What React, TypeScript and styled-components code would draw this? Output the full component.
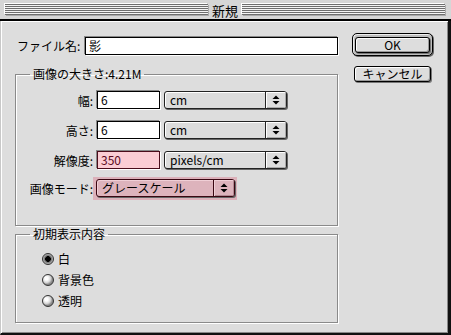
import React from 'react';
import styled, { createGlobalStyle } from 'styled-components';

const GlobalStyle = createGlobalStyle`
  html, body {
    margin: 0;
    padding: 0;
    background: #dddddd;
  }
  body {
    font-family: "Noto Sans CJK JP", "Noto Sans", sans-serif;
    font-size: 12px;
    color: #000;
  }
`;

const Window = styled.div`
  width: 451px;
  height: 335px;
  display: flex;
  flex-direction: column;
  background: #dddddd;
  overflow: hidden;
`;

const TitleBar = styled.div`
  height: 19px;
  flex: none;
  display: flex;
  align-items: center;
  gap: 4px;
  padding: 0 6px 0 5px;
  background: #d6d6d6;
  border-bottom: 2px solid #000;
`;

const Stripes = styled.div`
  flex: 1;
  height: 11px;
  background: repeating-linear-gradient(to bottom, #6e6e6e 0 1px, #f4f4f4 1px 2px);
  box-shadow: -1px -1px 0 #fff, 1px 1px 0 #aaa;
`;

const Title = styled.span`
  line-height: 19px;
  font-size: 13px;
  padding-top: 1px;
`;

const Body = styled.div`
  flex: 1;
  display: flex;
  gap: 14px;
  padding: 12px 15px 0 14px;
  border-left: 1px solid #c8c8c8;
  border-right: 3px solid #111;
  border-bottom: 2px solid #111;
  box-shadow: inset 1px 1px 0 #fff, inset -1px -1px 0 #888;
`;

const LeftColumn = styled.div`
  width: 323px;
  padding-top: 2px;
  display: flex;
  flex-direction: column;
`;

const RightColumn = styled.div`
  width: 82px;
  display: flex;
  flex-direction: column;
  align-items: center;
  gap: 10px;
`;

const FileRow = styled.div`
  display: flex;
  align-items: center;
  height: 21px;
`;

const Label = styled.span<{ $width?: number; $right?: boolean }>`
  width: ${(p) => (p.$width ? `${p.$width}px` : 'auto')};
  flex: none;
  white-space: nowrap;
  text-align: ${(p) => (p.$right ? 'right' : 'left')};
  padding-left: ${(p) => (p.$right ? 0 : 2)}px;
  box-sizing: border-box;
`;

const TextField = styled.div<{ $width: number; $pink?: boolean }>`
  width: ${(p) => p.$width}px;
  height: 18px;
  box-sizing: border-box;
  border: 1px solid ${(p) => (p.$pink ? '#4a0c1a' : '#000')};
  background: ${(p) => (p.$pink ? '#fbcdd4' : '#fff')};
  box-shadow: -1px -1px 0 #888, 1px 1px 0 #fff;
  padding-left: 3px;
  line-height: 16px;
  white-space: nowrap;
  color: ${(p) => (p.$pink ? '#5a0a1c' : '#000')};
`;

const Group = styled.fieldset<{ $top: number; $height: number }>`
  margin: ${(p) => p.$top}px 0 0 0;
  padding: 0;
  height: ${(p) => p.$height}px;
  box-sizing: border-box;
  border: 1px solid #8a8a8a;
  box-shadow: inset 1px 1px 0 #fff, 1px 1px 0 #fff;
  min-width: 0;
`;

const Legend = styled.legend`
  margin-left: 14px;
  padding: 0 3px;
  line-height: 16px;
  white-space: nowrap;
`;

const SizeGrid = styled.div`
  display: grid;
  grid-template-columns: 77px 63px 123px;
  column-gap: 4px;
  row-gap: 12px;
  align-items: center;
  padding-top: 9px;
`;

const ModeRow = styled.div`
  display: flex;
  align-items: center;
  margin-top: 8px;
`;

const Highlight = styled.div`
  padding: 2px 2px 3px 3px;
  background: #dcb1ba;
`;

const Popup = styled.div<{ $width: number; $pink?: boolean }>`
  width: ${(p) => p.$width}px;
  height: 18px;
  box-sizing: border-box;
  display: flex;
  border: 1px solid ${(p) => (p.$pink ? '#3a0712' : '#222')};
  border-radius: 3px;
  background: ${(p) => (p.$pink ? '#ddb3bc' : '#dcdcdc')};
  box-shadow: inset 1px 1px 0 ${(p) => (p.$pink ? '#f0cfd6' : '#fff')}, 1px 1px 0 #666;
  overflow: hidden;
`;

const PopupText = styled.span`
  flex: 1;
  padding-left: 5px;
  line-height: 16px;
  white-space: nowrap;
`;

const PopupArrow = styled.span<{ $pink?: boolean }>`
  width: 20px;
  flex: none;
  display: flex;
  align-items: center;
  justify-content: center;
  border-left: 1px solid ${(p) => (p.$pink ? '#3a0712' : '#222')};
  box-shadow: inset 1px 1px 0 ${(p) => (p.$pink ? '#f0cfd6' : '#fff')}, inset -1px -1px 0 ${(p) => (p.$pink ? '#b08a92' : '#aaa')};
`;

const RadioList = styled.div`
  display: flex;
  flex-direction: column;
  gap: 6px;
  padding: 9px 0 0 26px;
`;

const RadioRow = styled.label`
  display: flex;
  align-items: center;
  gap: 4px;
  height: 15px;
`;

const RadioDot = styled.span<{ $checked?: boolean }>`
  width: 12px;
  height: 12px;
  box-sizing: border-box;
  border-radius: 50%;
  border: 1px solid #333;
  background: ${(p) =>
    p.$checked
      ? 'radial-gradient(circle at 50% 50%, #000 0 2.6px, #666 3px, #bbb 5px)'
      : 'radial-gradient(circle at 35% 35%, #fff 0 1.5px, #d8d8d8 4px, #8a8a8a 6px)'};
`;

const Button = styled.button<{ $width: number }>`
  width: ${(p) => p.$width}px;
  height: 16px;
  padding: 0;
  font: inherit;
  line-height: 14px;
  color: #000;
  background: #dddddd;
  border: 1px solid #000;
  border-radius: 3px;
  box-shadow: inset 1px 1px 0 #fff, inset -1px -1px 0 #999, 1px 1px 0 #777;
`;

const DefaultRing = styled.div`
  padding: 2px;
  border: 1px solid #000;
  border-radius: 5px;
  background: #bdbdbd;
  box-shadow: inset 1px 1px 0 #eee, 1px 1px 0 #666;
`;

const Arrows = () => (
  <svg width="8" height="10" viewBox="0 0 8 10">
    <path d="M4 0.5 L7.5 4 L0.5 4 Z" fill="#000" />
    <path d="M4 9.5 L7.5 6 L0.5 6 Z" fill="#000" />
  </svg>
);

const sizeRows = [
  { label: '幅:', value: '6', unit: 'cm' },
  { label: '高さ:', value: '6', unit: 'cm' },
  { label: '解像度:', value: '350', unit: 'pixels/cm', pink: true },
];

const fillOptions = [
  { label: '白', checked: true },
  { label: '背景色' },
  { label: '透明' },
];

const App = () => (
  <>
    <GlobalStyle />
    <Window>
      <TitleBar>
        <Stripes />
        <Title>新規</Title>
        <Stripes />
      </TitleBar>
      <Body>
        <LeftColumn>
          <FileRow>
            <Label $width={70}>ファイル名:</Label>
            <TextField $width={253}>影</TextField>
          </FileRow>
          <Group $top={10} $height={160}>
            <Legend>画像の大きさ:4.21M</Legend>
            <SizeGrid>
              {sizeRows.map((r) => (
                <React.Fragment key={r.label}>
                  <Label $width={77} $right>{r.label}</Label>
                  <TextField $width={63} $pink={r.pink}>{r.value}</TextField>
                  <Popup $width={123}>
                    <PopupText>{r.unit}</PopupText>
                    <PopupArrow><Arrows /></PopupArrow>
                  </Popup>
                </React.Fragment>
              ))}
            </SizeGrid>
            <ModeRow>
              <Label $width={77} $right>画像モード:</Label>
              <Highlight>
                <Popup $width={139} $pink>
                  <PopupText>グレースケール</PopupText>
                  <PopupArrow $pink><Arrows /></PopupArrow>
                </Popup>
              </Highlight>
            </ModeRow>
          </Group>
          <Group $top={0} $height={97}>
            <Legend>初期表示内容</Legend>
            <RadioList>
              {fillOptions.map((o) => (
                <RadioRow key={o.label}>
                  <RadioDot $checked={o.checked} />
                  {o.label}
                </RadioRow>
              ))}
            </RadioList>
          </Group>
        </LeftColumn>
        <RightColumn>
          <DefaultRing>
            <Button $width={75}>OK</Button>
          </DefaultRing>
          <Button $width={77}>キャンセル</Button>
        </RightColumn>
      </Body>
    </Window>
  </>
);

export default App;
